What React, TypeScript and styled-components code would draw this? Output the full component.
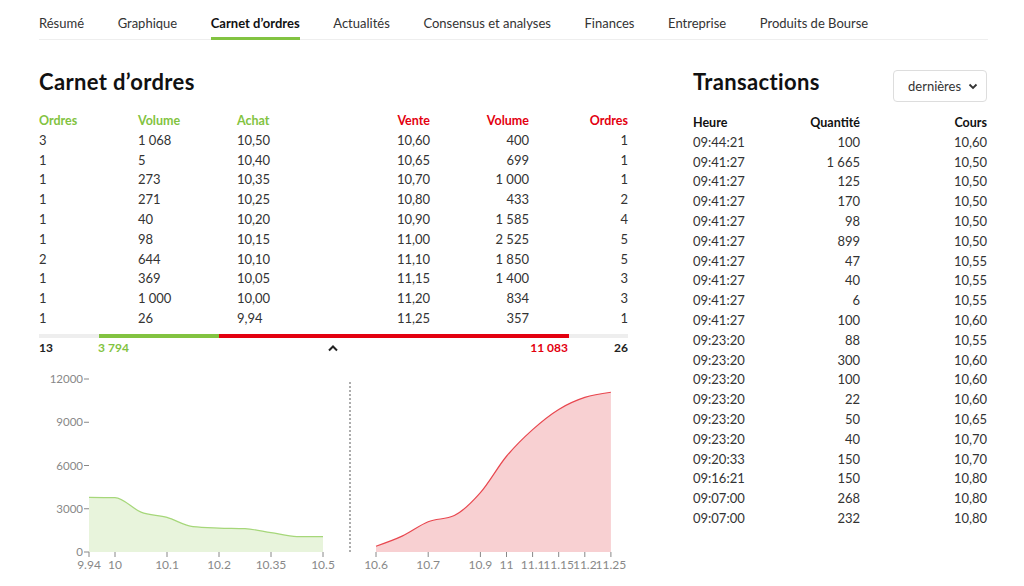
import React from 'react';
import styled, { createGlobalStyle } from 'styled-components';

const GREEN = '#82c341';
const RED = '#e3000f';
const NB = '\u202f';

const tabs = ['Résumé', 'Graphique', 'Carnet d’ordres', 'Actualités', 'Consensus et analyses', 'Finances', 'Entreprise', 'Produits de Bourse'];

// ordres, volume, achat, vente, volume, ordres
const book: [number, number, string, string, number, number][] = [
  [3, 1068, '10,50', '10,60', 400, 1],
  [1, 5, '10,40', '10,65', 699, 1],
  [1, 273, '10,35', '10,70', 1000, 1],
  [1, 271, '10,25', '10,80', 433, 2],
  [1, 40, '10,20', '10,90', 1585, 4],
  [1, 98, '10,15', '11,00', 2525, 5],
  [2, 644, '10,10', '11,10', 1850, 5],
  [1, 369, '10,05', '11,15', 1400, 3],
  [1, 1000, '10,00', '11,20', 834, 3],
  [1, 26, '9,94', '11,25', 357, 1],
];

const trades: [string, number, string][] = [
  ['09:44:21', 100, '10,60'],
  ['09:41:27', 1665, '10,50'],
  ['09:41:27', 125, '10,50'],
  ['09:41:27', 170, '10,50'],
  ['09:41:27', 98, '10,50'],
  ['09:41:27', 899, '10,50'],
  ['09:41:27', 47, '10,55'],
  ['09:41:27', 40, '10,55'],
  ['09:41:27', 6, '10,55'],
  ['09:41:27', 100, '10,60'],
  ['09:23:20', 88, '10,55'],
  ['09:23:20', 300, '10,60'],
  ['09:23:20', 100, '10,60'],
  ['09:23:20', 22, '10,60'],
  ['09:23:20', 50, '10,65'],
  ['09:23:20', 40, '10,70'],
  ['09:20:33', 150, '10,70'],
  ['09:16:21', 150, '10,80'],
  ['09:07:00', 268, '10,80'],
  ['09:07:00', 232, '10,80'],
];

const fmt = (n: number) => {
  const s = String(n);
  return s.length > 3 ? s.slice(0, -3) + NB + s.slice(-3) : s;
};

// monotone X curve, same maths as d3.curveMonotoneX
type Pt = [number, number];
const sign = (v: number) => (v < 0 ? -1 : 1);
const monotonePath = (pts: Pt[]) => {
  const n = pts.length;
  const t: number[] = new Array(n).fill(0);
  for (let i = 1; i < n - 1; i++) {
    const [x0, y0] = pts[i - 1], [x1, y1] = pts[i], [x2, y2] = pts[i + 1];
    const h0 = x1 - x0, h1 = x2 - x1;
    const s0 = (y1 - y0) / h0, s1 = (y2 - y1) / h1;
    const p = (s0 * h1 + s1 * h0) / (h0 + h1);
    t[i] = (sign(s0) + sign(s1)) * Math.min(Math.abs(s0), Math.abs(s1), 0.5 * Math.abs(p)) || 0;
  }
  const h = pts[1][0] - pts[0][0];
  t[0] = (3 * (pts[1][1] - pts[0][1]) / h - t[1]) / 2;
  const hl = pts[n - 1][0] - pts[n - 2][0];
  t[n - 1] = (3 * (pts[n - 1][1] - pts[n - 2][1]) / hl - t[n - 2]) / 2;
  let d = `M${pts[0][0]},${pts[0][1]}`;
  for (let i = 0; i < n - 1; i++) {
    const [x0, y0] = pts[i], [x1, y1] = pts[i + 1];
    const dx = (x1 - x0) / 3;
    d += `C${x0 + dx},${y0 + dx * t[i]},${x1 - dx},${y1 - dx * t[i + 1]},${x1},${y1}`;
  }
  return d;
};

const Y0 = 192;
const yOf = (v: number) => Y0 - (v * 173) / 12000;

const bidX = 50, bidStep = 26;
const bidPts: Pt[] = [3794, 3768, 2768, 2399, 1755, 1657, 1617, 1346, 1073, 1068].map((v, i) => [bidX + i * bidStep, yOf(v)]);
const bidLabels: [number, string][] = [[0, '9.94'], [1, '10'], [3, '10.1'], [5, '10.2'], [7, '10.35'], [9, '10.5']];

const askX = 337, askStep = 26.1;
const askPts: Pt[] = [400, 1099, 2099, 2532, 4117, 6642, 8492, 9892, 10726, 11083].map((v, i) => [askX + i * askStep, yOf(v)]);
const askLabels: [number, string][] = [[0, '10.6'], [2, '10.7'], [4, '10.9'], [5, '11'], [6, '11.1'], [7, '11.15'], [8, '11.2'], [9, '11.25']];

const areaPath = (pts: Pt[]) => `${monotonePath(pts)}L${pts[pts.length - 1][0]},${Y0}L${pts[0][0]},${Y0}Z`;

const GlobalStyle = createGlobalStyle`
  body {
    margin: 0;
    background: #fff;
    font-family: Lato, "Open Sans", sans-serif;
    color: #333;
  }
`;

const Page = styled.div`
  width: 949px;
  padding-left: 39px;
`;

const Tabs = styled.nav`
  display: flex;
  gap: 33.6px;
  border-bottom: 1px solid #eee;
`;

const Tab = styled.div<{ $active?: boolean }>`
  padding: 15px 0 6px;
  line-height: 16px;
  font-size: 13px;
  color: ${p => (p.$active ? '#111' : '#333')};
  font-weight: ${p => (p.$active ? 700 : 400)};
  border-bottom: 3px solid ${p => (p.$active ? GREEN : 'transparent')};
  margin-bottom: -1px;
`;

const Columns = styled.div`
  display: flex;
  gap: 65px;
`;

const BookColumn = styled.section`
  width: 589px;
`;

const TradesColumn = styled.section`
  width: 294px;
`;

const Title = styled.h2`
  margin: 29px 0 16px;
  font-size: 22px;
  line-height: 26px;
  font-weight: 700;
  letter-spacing: 0.35px;
  color: #111;
`;

const Grid6 = styled.div`
  display: grid;
  grid-template-columns: repeat(6, 99px);
  margin-right: -5px;
  line-height: 19.8px;
`;

const Cell = styled.div<{ $right?: boolean; $color?: string; $bold?: boolean; $pad?: boolean }>`
  text-align: ${p => (p.$right ? 'right' : 'left')};
  padding-right: ${p => (p.$pad ? '5px' : '0')};
  color: ${p => p.$color || '#333'};
  font-weight: ${p => (p.$bold ? 700 : 400)};
  font-size: ${p => (p.$bold ? '12.5px' : '13px')};
`;

const Bar = styled.div`
  margin-top: 5px;
  height: 4px;
  background: #eee;
  display: flex;
  justify-content: center;
`;

const Side = styled.div<{ $color: string }>`
  height: 100%;
  background: ${p => p.$color};
`;

const Totals = styled.div`
  display: grid;
  grid-template-columns: 59px 1fr 40px 1fr 60px;
  align-items: center;
  line-height: 20px;
  font-size: 12px;
  font-weight: 700;
`;

const Total = styled.span<{ $color?: string; $right?: boolean }>`
  color: ${p => p.$color || '#222'};
  text-align: ${p => (p.$right ? 'right' : 'left')};
`;

const Caret = styled.span`
  display: flex;
  justify-content: center;
`;

const Chart = styled.svg`
  display: block;
  margin-top: 2px;
  font-family: Lato, sans-serif;
`;

const TradesHead = styled.div`
  display: flex;
  justify-content: space-between;
  align-items: flex-start;
  margin: 29px 0 11px;
`;

const TradesTitle = styled.h2`
  margin: 0;
  font-size: 22px;
  line-height: 26px;
  font-weight: 700;
  letter-spacing: 0.35px;
  color: #111;
`;

const Select = styled.div`
  width: 94px;
  height: 32px;
  margin-top: 1px;
  box-sizing: border-box;
  border: 1px solid #ddd;
  border-radius: 4px;
  display: flex;
  align-items: center;
  justify-content: space-between;
  padding: 0 8px 0 14px;
  font-size: 13px;
  color: #333;
`;

const TradesGrid = styled.div`
  display: grid;
  grid-template-columns: 90px 77px 127px;
  line-height: 19.8px;
`;

export default function App() {
  const bidVol = 3794, askVol = 11083;
  const total = 470;
  const bidW = Math.round((total * bidVol) / (bidVol + askVol));
  return (
    <Page>
      <GlobalStyle />
      <Tabs>
        {tabs.map(t => (
          <Tab key={t} $active={t === 'Carnet d’ordres'}>{t}</Tab>
        ))}
      </Tabs>
      <Columns>
        <BookColumn>
          <Title>Carnet d’ordres</Title>
          <Grid6>
            <Cell $bold $color={GREEN}>Ordres</Cell>
            <Cell $bold $color={GREEN}>Volume</Cell>
            <Cell $bold $color={GREEN}>Achat</Cell>
            <Cell $bold $right $pad $color={RED}>Vente</Cell>
            <Cell $bold $right $pad $color={RED}>Volume</Cell>
            <Cell $bold $right $pad $color={RED}>Ordres</Cell>
            {book.map((r, i) => (
              <React.Fragment key={i}>
                <Cell>{r[0]}</Cell>
                <Cell>{fmt(r[1])}</Cell>
                <Cell>{r[2]}</Cell>
                <Cell $right $pad>{r[3]}</Cell>
                <Cell $right $pad>{fmt(r[4])}</Cell>
                <Cell $right $pad>{r[5]}</Cell>
              </React.Fragment>
            ))}
          </Grid6>
          <Bar>
            <Side $color={GREEN} style={{ width: bidW }} />
            <Side $color={RED} style={{ width: total - bidW }} />
          </Bar>
          <Totals>
            <Total>13</Total>
            <Total $color={GREEN}>3{NB}794</Total>
            <Caret>
              <svg width="12" height="8" viewBox="0 0 12 8">
                <polyline points="2,6.5 6,2.5 10,6.5" fill="none" stroke="#222" strokeWidth="2" />
              </svg>
            </Caret>
            <Total $color={RED} $right>11{NB}083</Total>
            <Total $right>26</Total>
          </Totals>
          <Chart width="589" height="214" viewBox="0 0 589 214">
            {[0, 3000, 6000, 9000, 12000].map(v => (
              <g key={v}>
                <text x="44" y={yOf(v) + 4} textAnchor="end" fontSize="11.5" fill="#888">{v}</text>
                <line x1="45" x2="50" y1={yOf(v)} y2={yOf(v)} stroke="#888" />
              </g>
            ))}
            <path d={areaPath(bidPts)} fill="#e8f4dc" />
            <path d={monotonePath(bidPts)} fill="none" stroke="#a6d77a" strokeWidth="1.2" />
            <path d={areaPath(askPts)} fill="#f8d0d2" />
            <path d={monotonePath(askPts)} fill="none" stroke="#e8474f" strokeWidth="1.2" />
            <line x1="311" x2="311" y1="22" y2="192" stroke="#777" strokeWidth="1.2" strokeDasharray="2,2" />
            {[...bidLabels.map(([i, l]) => [bidX + i * bidStep, l] as [number, string]),
              ...askLabels.map(([i, l]) => [askX + i * askStep, l] as [number, string])].map(([x, l]) => (
              <g key={l + x}>
                <line x1={x} x2={x} y1={Y0} y2={Y0 + 5} stroke="#888" />
                <text x={x} y={Y0 + 17} textAnchor="middle" fontSize="12" fill="#888">{l}</text>
              </g>
            ))}
          </Chart>
        </BookColumn>
        <TradesColumn>
          <TradesHead>
            <TradesTitle>Transactions</TradesTitle>
            <Select>
              dernières
              <svg width="10" height="7" viewBox="0 0 10 7">
                <polyline points="1.5,1.5 5,5 8.5,1.5" fill="none" stroke="#333" strokeWidth="1.8" />
              </svg>
            </Select>
          </TradesHead>
          <TradesGrid>
            <Cell $bold $color="#111">Heure</Cell>
            <Cell $bold $right $color="#111">Quantité</Cell>
            <Cell $bold $right $color="#111">Cours</Cell>
            {trades.map((r, i) => (
              <React.Fragment key={i}>
                <Cell>{r[0]}</Cell>
                <Cell $right>{fmt(r[1])}</Cell>
                <Cell $right>{r[2]}</Cell>
              </React.Fragment>
            ))}
          </TradesGrid>
        </TradesColumn>
      </Columns>
    </Page>
  );
}
